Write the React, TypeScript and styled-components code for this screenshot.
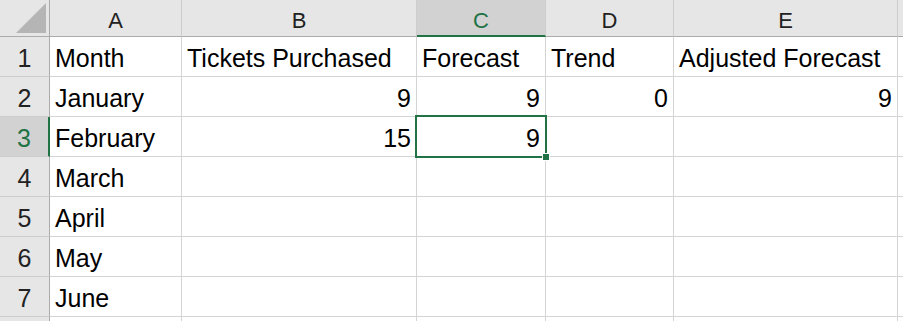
import React from "react";
import styled, { createGlobalStyle } from "styled-components";

const GlobalStyle = createGlobalStyle`
  * { box-sizing: border-box; }
  body {
    margin: 0;
    background: #ffffff;
    font-family: "Liberation Sans", Arial, sans-serif;
  }
`;

const columns = ["A", "B", "C", "D", "E", ""];
const widths = [50, 132, 235, 129, 128, 224, 60];

const rows: { value: string; right?: boolean }[][] = [
  [{ value: "Month" }, { value: "Tickets Purchased" }, { value: "Forecast" }, { value: "Trend" }, { value: "Adjusted Forecast" }, { value: "" }],
  [{ value: "January" }, { value: "9", right: true }, { value: "9", right: true }, { value: "0", right: true }, { value: "9", right: true }, { value: "" }],
  [{ value: "February" }, { value: "15", right: true }, { value: "9", right: true }, { value: "" }, { value: "" }, { value: "" }],
  [{ value: "March" }, { value: "" }, { value: "" }, { value: "" }, { value: "" }, { value: "" }],
  [{ value: "April" }, { value: "" }, { value: "" }, { value: "" }, { value: "" }, { value: "" }],
  [{ value: "May" }, { value: "" }, { value: "" }, { value: "" }, { value: "" }, { value: "" }],
  [{ value: "June" }, { value: "" }, { value: "" }, { value: "" }, { value: "" }, { value: "" }],
  [{ value: "" }, { value: "" }, { value: "" }, { value: "" }, { value: "" }, { value: "" }],
];

// rows past the window edge keep their grid lines but show no label
const VISIBLE_ROWS = 7;
const SELECTED_ROW = 2;
const SELECTED_COL = 2;

const App = () => {
  return (
    <>
      <GlobalStyle />
      <Sheet>
        <Corner>
          <CornerTriangle viewBox="0 0 30 30">
            <polygon points="30,0 30,30 0,30" fill="#b5b5b5" />
          </CornerTriangle>
        </Corner>
        {columns.map((c, i) => (
          <ColHeader key={c + i} $active={i === SELECTED_COL}>
            {c}
          </ColHeader>
        ))}
        {rows.map((row, r) => (
          <React.Fragment key={r}>
            <RowHeader $active={r === SELECTED_ROW}>
              {r < VISIBLE_ROWS ? r + 1 : ""}
            </RowHeader>
            {row.map((cell, c) => (
              <Cell key={c} $right={cell.right}>
                {cell.value}
                {r === SELECTED_ROW && c === SELECTED_COL && (
                  <Selection>
                    <FillHandle />
                  </Selection>
                )}
              </Cell>
            ))}
          </React.Fragment>
        ))}
      </Sheet>
    </>
  );
};

const Sheet = styled.div`
  display: grid;
  grid-template-columns: ${widths.map((w) => w + "px").join(" ")};
  grid-template-rows: 37px repeat(8, 40px);
  width: 903px;
  height: 321px;
  overflow: hidden;
`;

const Corner = styled.div`
  background: #e6e6e6;
  border-right: 1px solid #ababab;
  border-bottom: 1px solid #ababab;
  display: flex;
  align-items: flex-end;
  justify-content: flex-end;
  padding: 0 3px 3px 0;
`;

const CornerTriangle = styled.svg`
  width: 30px;
  height: 30px;
  display: block;
`;

const ColHeader = styled.div<{ $active?: boolean }>`
  background: ${(p) => (p.$active ? "#d2d2d2" : "#e6e6e6")};
  color: ${(p) => (p.$active ? "#217346" : "#222222")};
  border-right: 1px solid #cdcdcd;
  border-bottom: ${(p) => (p.$active ? "2px solid #217346" : "1px solid #ababab")};
  font-size: 22px;
  text-align: center;
  padding-top: 6px;
  line-height: 29px;
`;

const RowHeader = styled.div<{ $active?: boolean }>`
  background: ${(p) => (p.$active ? "#d2d2d2" : "#e6e6e6")};
  color: ${(p) => (p.$active ? "#217346" : "#222222")};
  border-bottom: 1px solid #cdcdcd;
  border-right: ${(p) => (p.$active ? "2px solid #217346" : "1px solid #ababab")};
  font-size: 25px;
  text-align: center;
  padding-top: 3px;
  line-height: 36px;
`;

const Cell = styled.div<{ $right?: boolean }>`
  position: relative;
  border-right: 1px solid #d4d4d4;
  border-bottom: 1px solid #d4d4d4;
  font-size: 25px;
  color: #000000;
  padding: 3px 5px 0 5px;
  line-height: 36px;
  white-space: nowrap;
  text-align: ${(p) => (p.$right ? "right" : "left")};
`;

const Selection = styled.div`
  position: absolute;
  z-index: 2;
  top: -2px;
  left: -2px;
  right: -2px;
  bottom: -2px;
  border: 2px solid #217346;
  pointer-events: none;
`;

const FillHandle = styled.div`
  position: absolute;
  right: -5px;
  bottom: -5px;
  width: 8px;
  height: 8px;
  background: #217346;
  border: 1px solid #ffffff;
`;

export default App;
